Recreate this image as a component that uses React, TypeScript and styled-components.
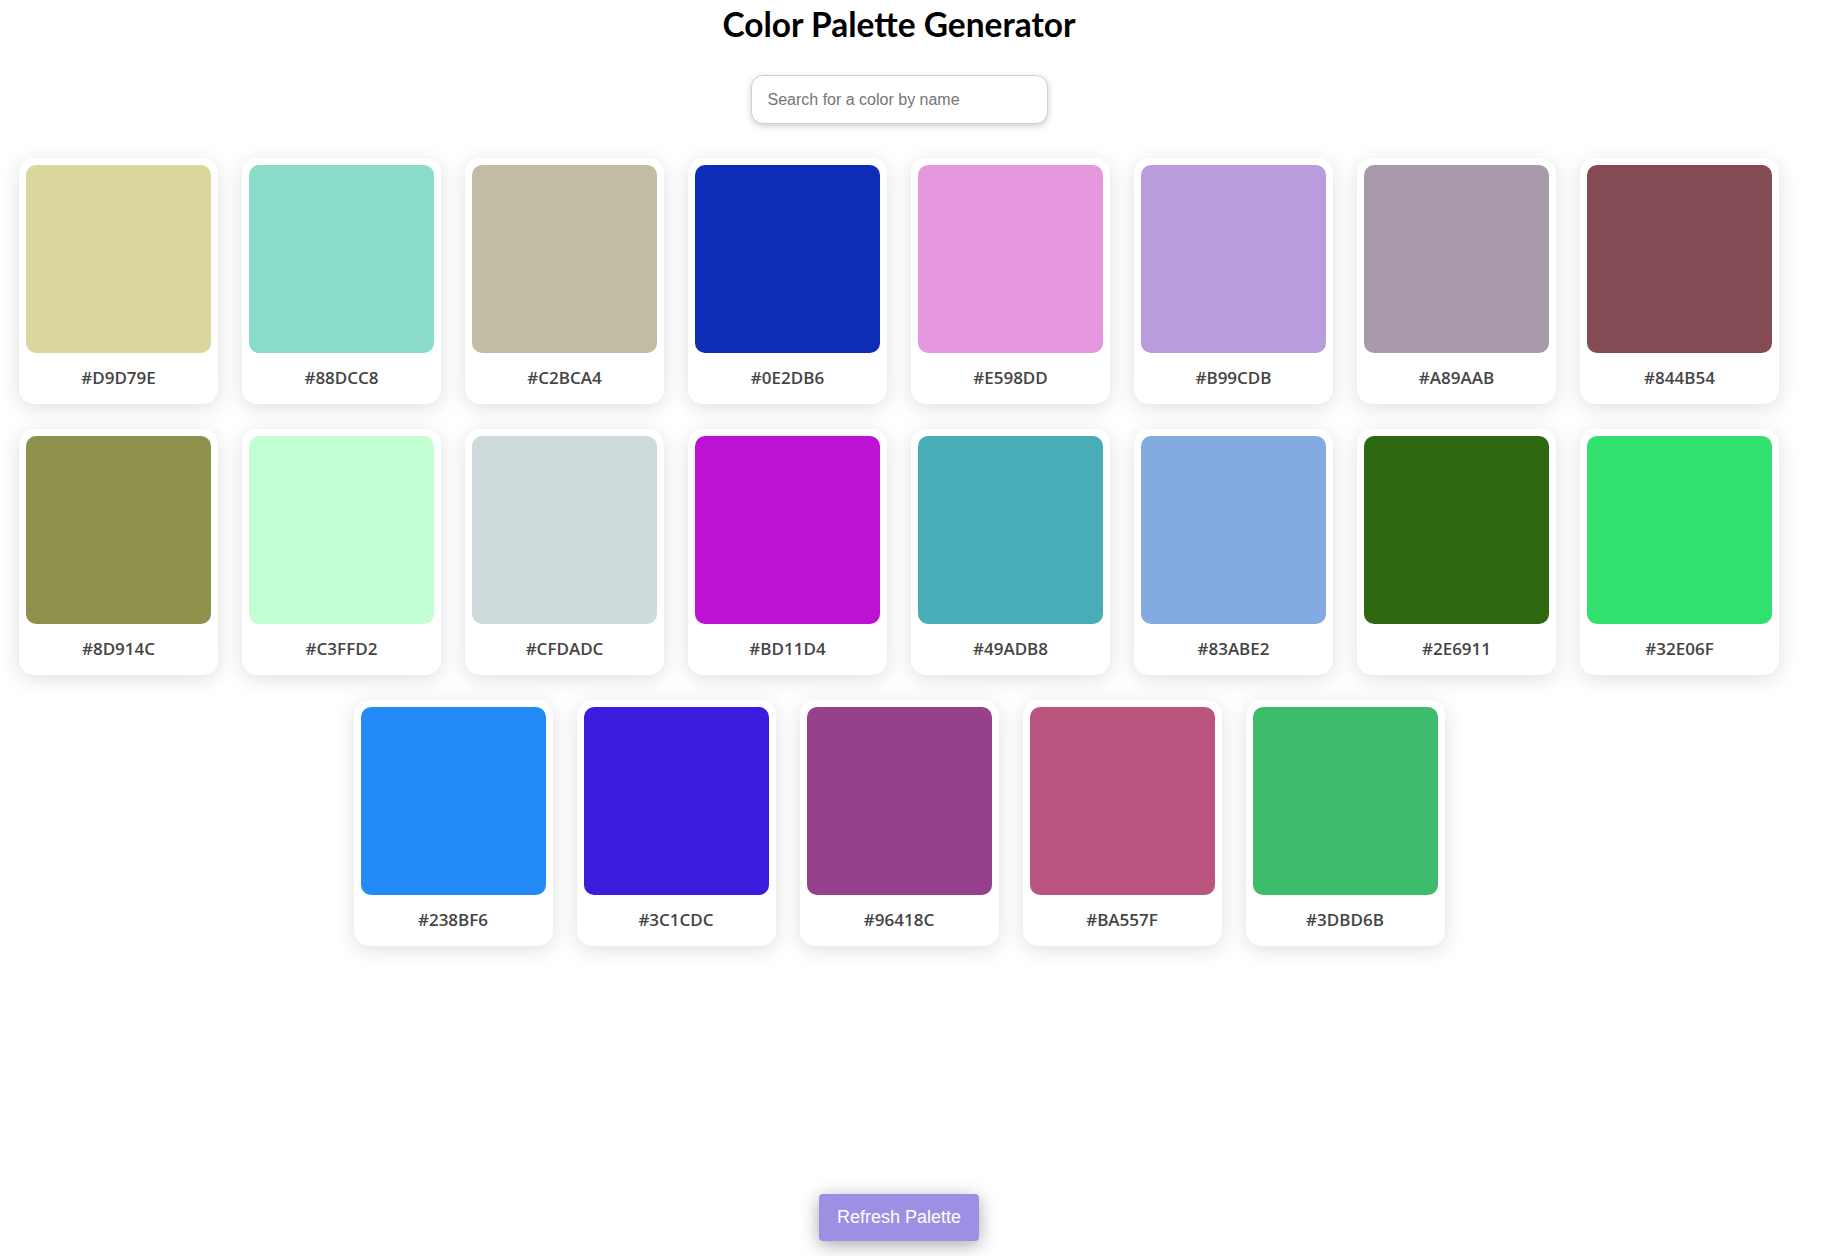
import styled, { createGlobalStyle } from "styled-components";

const colors = [
  "#D9D79E",
  "#88DCC8",
  "#C2BCA4",
  "#0E2DB6",
  "#E598DD",
  "#B99CDB",
  "#A89AAB",
  "#844B54",
  "#8D914C",
  "#C3FFD2",
  "#CFDADC",
  "#BD11D4",
  "#49ADB8",
  "#83ABE2",
  "#2E6911",
  "#32E06F",
  "#238BF6",
  "#3C1CDC",
  "#96418C",
  "#BA557F",
  "#3DBD6B",
];

const GlobalStyle = createGlobalStyle`
  html, body {
    margin: 0;
    padding: 0;
    background: #fff;
  }
`;

const Page = styled.div`
  width: 1798px;
  min-height: 100vh;
  display: flex;
  flex-direction: column;
  align-items: center;
  box-sizing: border-box;
`;

const Title = styled.h1`
  margin: 0;
  padding-top: 4px;
  line-height: 40px;
  font-family: "Lato", "Open Sans", sans-serif;
  font-weight: 700;
  font-size: 33.5px;
  color: #000;
`;

const Search = styled.input`
  margin-top: 31px;
  width: 297px;
  height: 49px;
  box-sizing: border-box;
  padding: 0 16px;
  border: 1px solid #d0d0d0;
  border-radius: 12px;
  box-shadow: 0 2px 7px rgba(0, 0, 0, 0.2);
  font-family: "Liberation Sans", Arial, sans-serif;
  font-size: 16px;
  color: #333;
  outline: none;
  &::placeholder {
    color: #757575;
  }
`;

const Grid = styled.div`
  margin-top: 34px;
  width: 100%;
  display: flex;
  flex-wrap: wrap;
  justify-content: center;
  gap: 25px 24px;
`;

const Card = styled.div`
  width: 199px;
  height: 246px;
  box-sizing: border-box;
  padding: 7px;
  background: #fff;
  border-radius: 15px;
  box-shadow: 0 4px 20px rgba(0, 0, 0, 0.13);
  display: flex;
  flex-direction: column;
`;

const Swatch = styled.div<{ $color: string }>`
  height: 188px;
  border-radius: 10px;
  background: ${(p) => p.$color};
`;

const Label = styled.div`
  flex: 1;
  display: flex;
  align-items: center;
  justify-content: center;
  padding-top: 4px;
  font-family: "Open Sans", "Noto Sans", sans-serif;
  font-weight: 600;
  font-size: 17px;
  color: #444;
`;

const RefreshButton = styled.button`
  margin-top: auto;
  margin-bottom: 15px;
  width: 160px;
  height: 47px;
  border: none;
  border-radius: 4px;
  background: #9d8fe3;
  color: #fff;
  font-family: "Liberation Sans", Arial, sans-serif;
  font-size: 18px;
  box-shadow: 0 4px 18px rgba(0, 0, 0, 0.35);
  cursor: pointer;
`;

export default function App() {
  return (
    <>
      <GlobalStyle />
      <Page>
        <Title>Color Palette Generator</Title>
        <Search placeholder="Search for a color by name" />
        <Grid>
          {colors.map((c) => (
            <Card key={c}>
              <Swatch $color={c} />
              <Label>{c}</Label>
            </Card>
          ))}
        </Grid>
        <RefreshButton>Refresh Palette</RefreshButton>
      </Page>
    </>
  );
}
